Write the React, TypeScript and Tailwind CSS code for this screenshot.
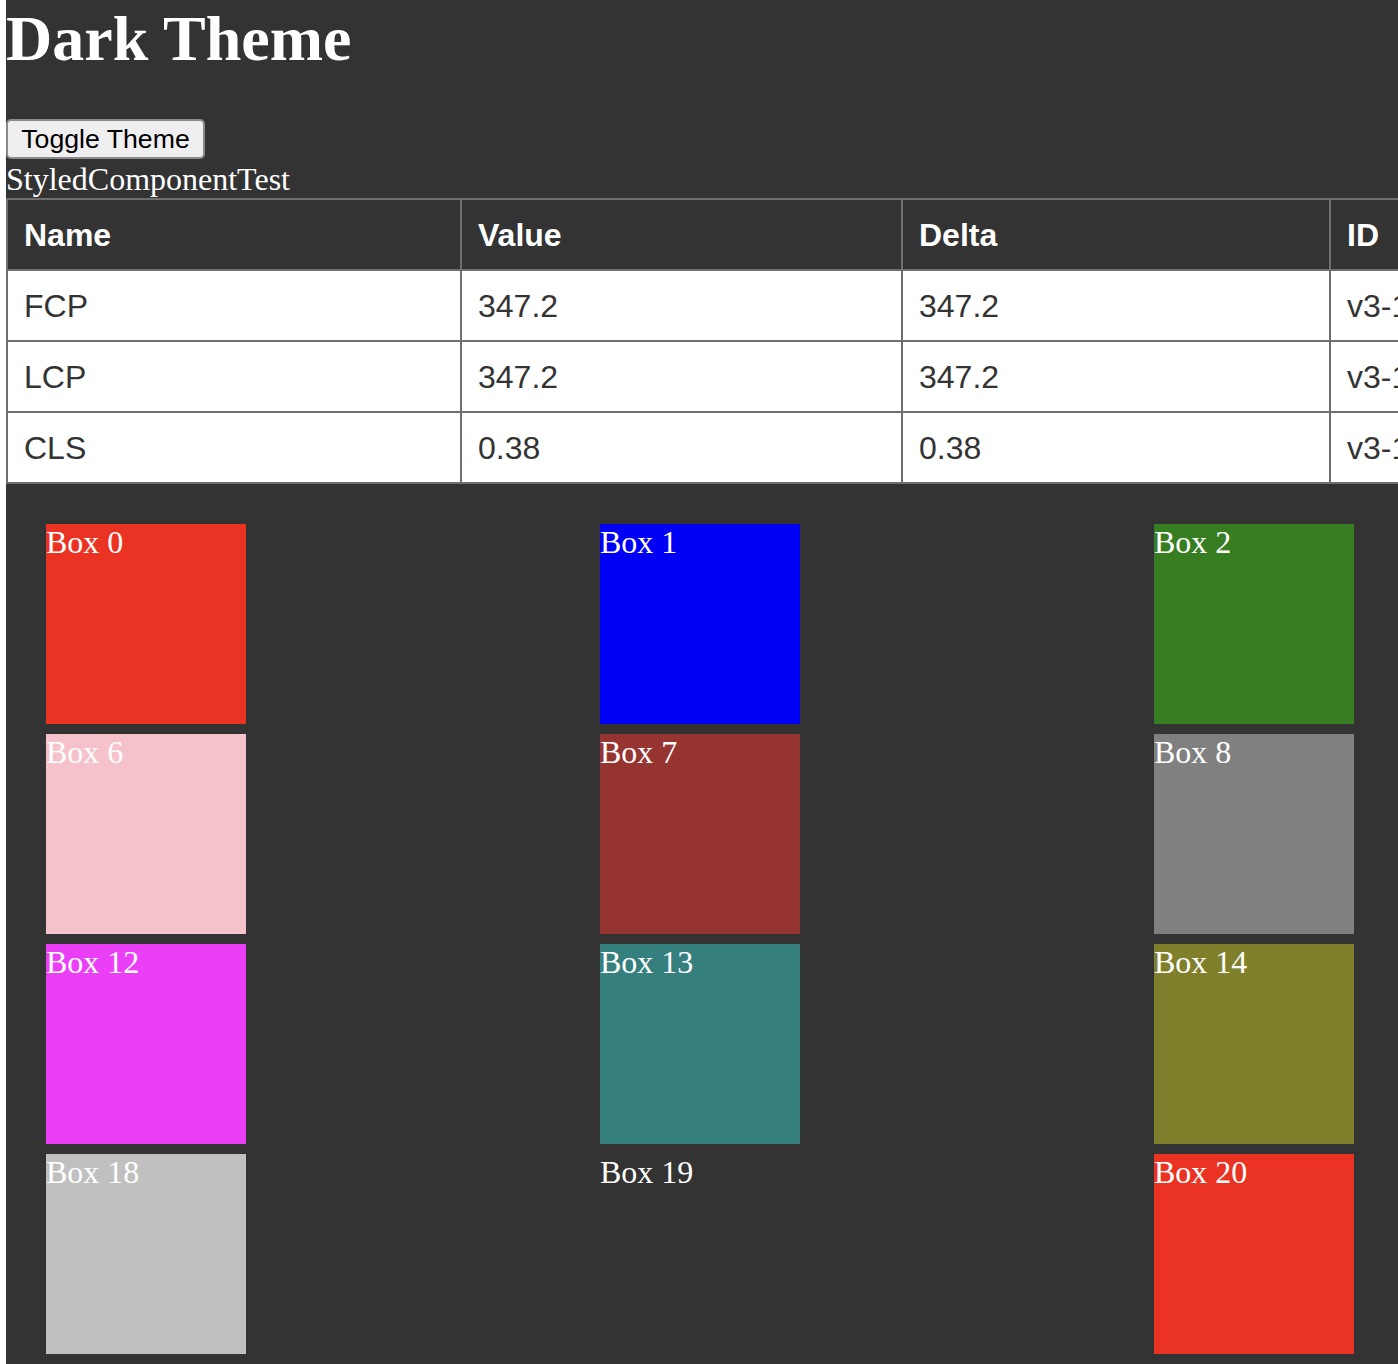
import React from "react";

const rows = [
  { name: "FCP", value: "347.2", delta: "347.2", id: "v3-1718032934512-4967126589324" },
  { name: "LCP", value: "347.2", delta: "347.2", id: "v3-1718032934512-8124567309121" },
  { name: "CLS", value: "0.38", delta: "0.38", id: "v3-1718032934512-3349871266541" },
];

const colors: (string | null)[] = [
  "#ea3323", "#0000f5", "#377e22", "#fffe54", "#75147c", "#f19e38",
  "#f5c2cb", "#963432", "#808080", "#000000", "#ffffff", "#75fbfd",
  "#ea3ff7", "#367f7f", "#807f2c", "#00007b", "#75140c", "#75fb4c",
  "#c0c0c0", null, "#ea3323", "#0000f5", "#377e22", "#fffe54",
];

function Box({ i, color }: { i: number; color: string | null }) {
  return (
    <div
      className="h-[200px] w-[200px] text-[32px] leading-[37px] text-white"
      style={color ? { backgroundColor: color } : undefined}
    >
      Box {i}
    </div>
  );
}

export default function App() {
  return (
    <div className="h-[1364px] w-[1398px] overflow-hidden bg-white">
      <div className="ml-[6px] w-max bg-[#333333] font-['Liberation_Serif',serif] text-white">
        <h1 className="mb-[42px] text-[64px] font-bold leading-[77px]">Dark Theme</h1>
        <button className="flex h-[40px] w-[199px] items-center justify-center rounded-[5px] border-2 border-[#8a8a8a] bg-[#efefef] font-['Liberation_Sans',Arial,sans-serif] text-[26.67px] text-black">
          Toggle Theme
        </button>
        <div className="h-[39px] text-[32px] leading-[41px]">StyledComponentTest</div>
        <table className="w-[3394px] table-fixed border-collapse font-['Liberation_Sans',Arial,sans-serif] text-[32px]">
          <colgroup>
            <col className="w-[454px]" />
            <col className="w-[441px]" />
            <col className="w-[428px]" />
            <col />
          </colgroup>
          <thead>
            <tr className="h-[71px] bg-[#333333] text-white">
              <th className="border-2 border-[#6f6f6f] px-[16px] text-left font-bold">Name</th>
              <th className="border-2 border-[#6f6f6f] px-[16px] text-left font-bold">Value</th>
              <th className="border-2 border-[#6f6f6f] px-[16px] text-left font-bold">Delta</th>
              <th className="border-2 border-[#6f6f6f] px-[16px] text-left font-bold">ID</th>
            </tr>
          </thead>
          <tbody>
            {rows.map((r) => (
              <tr key={r.name} className="h-[71px] bg-white text-[#333333]">
                <td className="border-2 border-[#6f6f6f] px-[16px]">{r.name}</td>
                <td className="border-2 border-[#6f6f6f] px-[16px]">{r.value}</td>
                <td className="border-2 border-[#6f6f6f] px-[16px]">{r.delta}</td>
                <td className="border-2 border-[#6f6f6f] px-[16px]">{r.id}</td>
              </tr>
            ))}
          </tbody>
        </table>
        <div className="grid grid-cols-[repeat(6,544px)] gap-[10px] p-[40px]">
          {colors.map((c, i) => (
            <Box key={i} i={i} color={c} />
          ))}
        </div>
      </div>
    </div>
  );
}
